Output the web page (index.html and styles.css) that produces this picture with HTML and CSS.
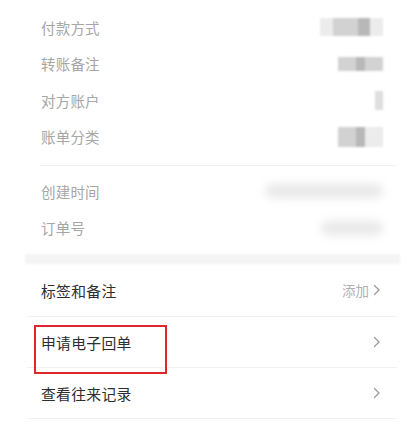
FILE: index.html
```html
<!DOCTYPE html>
<html lang="zh">
<head>
<meta charset="utf-8">
<link rel="stylesheet" href="styles.css">
</head>
<body>
<div class="page">
  <section class="info">
    <div class="row"><span class="label">付款方式</span>
      <span class="pix pix1"><i class="c0"></i><i class="c1"></i><i class="c1"></i><i class="c2"></i><i class="c0"></i></span></div>
    <div class="row"><span class="label">转账备注</span>
      <span class="pix pix2"><i class="c1"></i><i class="c1"></i><i class="c2"></i><i class="c1"></i><i class="c1"></i></span></div>
    <div class="row"><span class="label">对方账户</span>
      <span class="pix pix3"><i class="c1"></i></span></div>
    <div class="row"><span class="label">账单分类</span>
      <span class="pix pix4"><i class="c1"></i><i class="c1"></i><i class="c2"></i><i class="c0"></i><i class="c0"></i></span></div>
  </section>
  <section class="info info2">
    <div class="row"><span class="label">创建时间</span><span class="blur blur1"></span></div>
    <div class="row"><span class="label">订单号</span><span class="blur blur2"></span></div>
  </section>
  <div class="band"></div>
  <section class="menu">
    <div class="item"><span class="title">标签和备注</span><span class="extra">添加<svg class="chev" viewBox="0 0 8 12"><path d="M1.5 1.5 L6 6 L1.5 10.5" /></svg></span></div>
    <div class="item highlight"><span class="title">申请电子回单</span><svg class="chev" viewBox="0 0 8 12"><path d="M1.5 1.5 L6 6 L1.5 10.5" /></svg><span class="mark"></span></div>
    <div class="item"><span class="title">查看往来记录</span><svg class="chev" viewBox="0 0 8 12"><path d="M1.5 1.5 L6 6 L1.5 10.5" /></svg></div>
  </section>
</div>
</body>
</html>
```
FILE: styles.css
```css
* { box-sizing: border-box; margin: 0; padding: 0; }
body {
  background: #fff;
  font-family: "Noto Sans CJK SC", "Noto Sans", sans-serif;
  width: 410px;
  height: 422px;
  overflow: hidden;
}
.page { display: flex; flex-direction: column; }
.info {
  margin: 0 14px 0 40px;
  padding: 9px 0 10px;
  border-bottom: 1px solid #f0f0f0;
}
.info2 { border-bottom: none; padding-top: 7px; padding-bottom: 8px; }
.row {
  height: 36.5px;
  display: flex;
  align-items: center;
  justify-content: space-between;
  padding-left: 1px;
  padding-right: 13px;
}
.label { font-size: 14.5px; color: #a6a6a6; letter-spacing: 0.2px; }
.pix { display: flex; filter: blur(0.8px); }
.pix i { display: block; }
.pix1 { width: 63px; height: 18px; }
.pix1 i { width: 12.6px; height: 18px; }
.pix2 { width: 45px; height: 14px; }
.pix2 i { width: 9px; height: 14px; }
.pix3 { width: 8px; height: 19px; }
.pix3 i { width: 8px; height: 19px; background: #dedede; }
.pix4 { width: 45px; height: 20px; }
.pix4 i { width: 9px; height: 20px; }
.c0 { background: #ececec; }
.c1 { background: #d2d2d2; }
.c2 { background: #b8b8b8; }
.blur { display: block; background: #e8e8e8; filter: blur(5px); border-radius: 8px; }
.blur1 { width: 118px; height: 14px; }
.blur2 { width: 62px; height: 14px; }
.band {
  height: 10px;
  margin: 0 10px 0 25px;
  background: #f4f4f4;
  filter: blur(1px);
}
.menu { margin: 0 13px 0 27px; }
.item {
  position: relative;
  height: 51px;
  display: flex;
  align-items: center;
  justify-content: space-between;
  padding: 0 16px 0 14px;
  border-bottom: 1px solid #f2f2f2;
}
.item:first-child { height: 53px; padding-top: 0; }
.title { font-size: 14.8px; color: #2e2e2e; letter-spacing: 0.3px; }
.extra { display: flex; align-items: center; gap: 4px; font-size: 13.5px; color: #b0b0b0; }
.chev { width: 8px; height: 12px; }
.chev path { fill: none; stroke: #9a9a9a; stroke-width: 1.3; stroke-linecap: round; stroke-linejoin: round; }
.mark {
  position: absolute;
  left: 7px;
  top: 8px;
  width: 133px;
  height: 49px;
  border: 2.5px solid #e0262a;
}
```
